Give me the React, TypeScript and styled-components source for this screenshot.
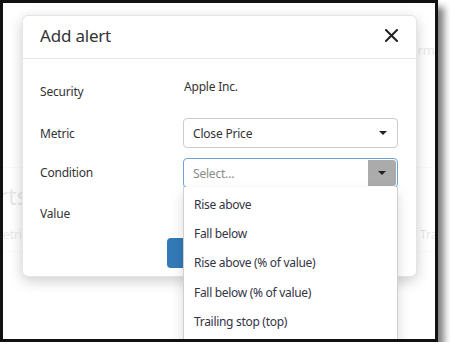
import styled, { createGlobalStyle } from "styled-components";

const GlobalStyle = createGlobalStyle`
  body {
    margin: 0;
    background: #ffffff;
    font-family: "Noto Sans", "Open Sans", sans-serif;
  }
`;

const Screen = styled.div`
  position: relative;
  box-sizing: border-box;
  width: 438px;
  height: 342px;
  border: 3px solid #111111;
  box-shadow: 6px 7px 7px rgba(0, 0, 0, 0.5);
  overflow: hidden;
  background: #ffffff;
`;

const Page = styled.div`
  display: flex;
  flex-direction: column;
  width: 464px;
  margin-left: -32px;
  color: #8a8a8a;
`;

const NavRow = styled.div`
  display: flex;
  justify-content: flex-end;
  height: 165px;
  padding: 38px 0 0 0;
  box-sizing: border-box;
  border-bottom: 1px solid #e6e6e6;
  font-size: 13px;
`;

const Heading = styled.h2`
  margin: 13px 0 0 -8px;
  font-size: 24px;
  font-weight: 400;
  line-height: 30px;
`;

const TableHead = styled.div`
  display: grid;
  grid-template-columns: 428px auto;
  margin-top: 9px;
  padding: 6px 0 8px 21px;
  border-bottom: 1px solid #e6e6e6;
  font-size: 12px;
  white-space: nowrap;
`;

const Backdrop = styled.div`
  position: absolute;
  inset: 0;
  background: rgba(255, 255, 255, 0.8);
`;

const Modal = styled.div`
  position: absolute;
  left: 19px;
  top: 12px;
  width: 395px;
  height: 262px;
  box-sizing: border-box;
  background: #ffffff;
  border: 1px solid rgba(0, 0, 0, 0.1);
  border-radius: 6px;
  box-shadow: 0 4px 14px rgba(0, 0, 0, 0.2);
  color: #333333;
  letter-spacing: -0.2px;
`;

const Header = styled.div`
  display: flex;
  align-items: center;
  justify-content: space-between;
  box-sizing: border-box;
  height: 43px;
  padding: 0 18px 3px 17px;
  border-bottom: 1px solid #e5e5e5;
`;

const Title = styled.div`
  font-size: 17px;
  color: #333333;
`;

const CloseButton = styled.div`
  display: flex;
  cursor: pointer;
`;

const Body = styled.div`
  display: grid;
  grid-template-columns: 143px 1fr;
  grid-auto-rows: 30px;
  row-gap: 10px;
  padding: 19px 18px 0 17px;
`;

const Label = styled.div<{ $lift?: number }>`
  align-self: center;
  margin-top: ${(p) => -(p.$lift ?? 0)}px;
  font-size: 12px;
`;

const StaticValue = styled.div`
  align-self: start;
  line-height: 17px;
  font-size: 12px;
  padding-left: 1px;
`;

const Field = styled.div<{ $focused?: boolean }>`
  position: relative;
  display: flex;
  align-items: center;
  box-sizing: border-box;
  height: 30px;
  padding-left: 9px;
  border: 1px solid ${(p) => (p.$focused ? "#6fa3d8" : "#cccccc")};
  border-radius: 4px;
  font-size: 12px;
  color: ${(p) => (p.$focused ? "#8a8a8a" : "#333333")};
`;

const FieldText = styled.span`
  flex: 1;
`;

const Caret = styled.span`
  width: 0;
  height: 0;
  border-left: 4px solid transparent;
  border-right: 4px solid transparent;
  border-top: 4px solid #222222;
`;

const PlainArrow = styled.div`
  display: flex;
  align-items: center;
  justify-content: center;
  width: 28px;
`;

const ToggleButton = styled.div`
  display: flex;
  align-items: center;
  justify-content: center;
  align-self: stretch;
  width: 28px;
  margin: 1px;
  background: #ababab;
  border-radius: 0 3px 3px 0;
`;

const Menu = styled.div`
  position: absolute;
  top: 100%;
  left: -1px;
  right: -1px;
  padding-top: 3px;
  background: #ffffff;
  border: 1px solid #d0d0d0;
  border-top: none;
  box-shadow: 0 6px 12px rgba(0, 0, 0, 0.15);
  z-index: 2;
`;

const MenuItem = styled.div`
  padding: 0 10px;
  line-height: 29.2px;
  font-size: 12px;
  letter-spacing: -0.3px;
  color: #333344;
  white-space: nowrap;
`;

const Footer = styled.div`
  display: flex;
  justify-content: center;
  padding-top: 10px;
`;

const PrimaryButton = styled.div`
  width: 105px;
  height: 30px;
  background: #337ab7;
  border-radius: 4px;
  color: #ffffff;
  font-size: 12px;
  line-height: 30px;
  text-align: center;
`;

const conditions = [
  "Rise above",
  "Fall below",
  "Rise above (% of value)",
  "Fall below (% of value)",
  "Trailing stop (top)",
  "Trailing stop (bottom)",
];

export default function App() {
  return (
    <>
      <GlobalStyle />
      <Screen>
        <Page>
          <NavRow>Platform</NavRow>
          <Heading>Alerts</Heading>
          <TableHead>
            <span>Metric</span>
            <span>Trailing</span>
          </TableHead>
        </Page>
        <Backdrop />
        <Modal>
          <Header>
            <Title>Add alert</Title>
            <CloseButton>
              <svg width="13" height="13" viewBox="0 0 13 13">
                <path
                  d="M1 1 L12 12 M12 1 L1 12"
                  stroke="#222"
                  strokeWidth="2"
                  strokeLinecap="square"
                />
              </svg>
            </CloseButton>
          </Header>
          <Body>
            <Label $lift={3}>Security</Label>
            <StaticValue>Apple Inc.</StaticValue>

            <Label>Metric</Label>
            <Field>
              <FieldText>Close Price</FieldText>
              <PlainArrow>
                <Caret />
              </PlainArrow>
            </Field>

            <Label $lift={1}>Condition</Label>
            <Field $focused>
              <FieldText>Select...</FieldText>
              <ToggleButton>
                <Caret />
              </ToggleButton>
              <Menu>
                {conditions.map((c) => (
                  <MenuItem key={c}>{c}</MenuItem>
                ))}
              </Menu>
            </Field>

            <Label>Value</Label>
            <div />
          </Body>
          <Footer>
            <PrimaryButton>Add alert</PrimaryButton>
          </Footer>
        </Modal>
      </Screen>
    </>
  );
}
